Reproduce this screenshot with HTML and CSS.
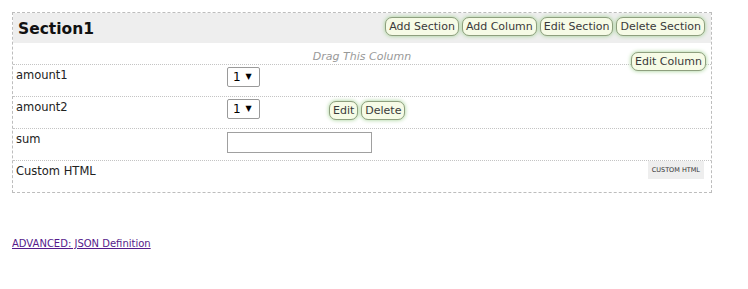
FILE: index.html
```html
<!DOCTYPE html>
<html lang="en">
<head>
    <meta charset="UTF-8">
    <title>Form Builder</title>
    <link rel="stylesheet" href="styles.css">
</head>
<body>
    <div class="section">
        <div class="section-header">
            <h2>Section1</h2>
            <div class="tools">
                <span class="btn">Add Section</span>
                <span class="btn">Add Column</span>
                <span class="btn">Edit Section</span>
                <span class="btn">Delete Section</span>
            </div>
        </div>
        <div class="column">
            <div class="drag-row">
                Drag This Column
                <span class="btn edit-column">Edit Column</span>
            </div>
            <div class="field">
                <label>amount1</label>
                <div class="control">
                    <span class="select">1 <span class="arrow">&#9660;</span></span>
                </div>
            </div>
            <div class="field">
                <label>amount2</label>
                <div class="control">
                    <span class="select">1 <span class="arrow">&#9660;</span></span>
                    <div class="field-tools">
                        <span class="btn">Edit</span>
                        <span class="btn">Delete</span>
                    </div>
                </div>
            </div>
            <div class="field">
                <label>sum</label>
                <div class="control">
                    <input type="text" class="text-input">
                </div>
            </div>
            <div class="field last">
                <label>Custom HTML</label>
                <span class="tag">CUSTOM HTML</span>
            </div>
        </div>
    </div>

    <a href="#" class="json-link">ADVANCED: JSON Definition</a>
</body>
</html>
```

FILE: styles.css
```css
body {
    margin: 12px;
    font-family: "DejaVu Sans", Verdana, sans-serif;
    font-size: 11px;
    color: #222;
    background: #fff;
}
.section {
    width: 698px;
    border: 1px dashed #bdbdbd;
}
.section-header {
    display: flex;
    justify-content: space-between;
    align-items: center;
    height: 30px;
    background-color: #eeeeee;
    padding: 0 6px 0 5px;
}
.section-header h2 {
    margin: 0;
    font-size: 15.5px;
    font-weight: bold;
    color: #111;
    padding-top: 2px;
}
.tools {
    display: flex;
    gap: 3px;
    margin-top: -3px;
}
.btn {
    display: inline-block;
    height: 17px;
    line-height: 17px;
    padding: 0 3px;
    border: 1px solid #8e9f7e;
    border-radius: 7px;
    background-color: #f6fbe6;
    color: #3a3a3a;
    font-size: 11px;
    box-shadow: 0 0 4px #9fcf8f;
    white-space: nowrap;
}
.column {
    position: relative;
}
.drag-row {
    height: 21px;
    line-height: 27px;
    text-align: center;
    font-style: italic;
    color: #999;
    font-size: 11px;
    border-bottom: 1px dotted #c4c4c4;
}
.edit-column {
    position: absolute;
    top: 9px;
    right: 5px;
    font-style: normal;
    line-height: 17px;
}
.field {
    display: flex;
    height: 31px;
    border-bottom: 1px dotted #c4c4c4;
}
.field.last {
    border-bottom: none;
    justify-content: space-between;
}
.field label {
    width: 211px;
    padding: 3px 0 0 3px;
    font-size: 11.5px;
    color: #222;
}
.control {
    display: flex;
    align-items: flex-start;
    padding-top: 2px;
}
.select {
    display: inline-block;
    width: 26px;
    height: 18px;
    line-height: 18px;
    padding-left: 5px;
    border: 1px solid #9a9a9a;
    border-radius: 2px;
    background: #fff;
    color: #000;
    font-size: 12px;
}
.select .arrow {
    font-size: 8px;
    vertical-align: 2px;
    margin-left: 1px;
}
.field-tools {
    display: flex;
    gap: 3px;
    margin-left: 69px;
    margin-top: 2px;
}
.text-input {
    width: 141px;
    height: 17px;
    margin: 1px 0 0 0;
    padding: 1px;
    border: 1px solid #a0a0a0;
    font-family: inherit;
}
.tag {
    align-self: flex-start;
    height: 18px;
    line-height: 18px;
    padding: 0 4px;
    margin-right: 7px;
    background-color: #eeeeee;
    color: #333;
    font-size: 6.5px;
}
.json-link {
    display: inline-block;
    margin-top: 45px;
    color: #551a8b;
    font-size: 10px;
}
```
